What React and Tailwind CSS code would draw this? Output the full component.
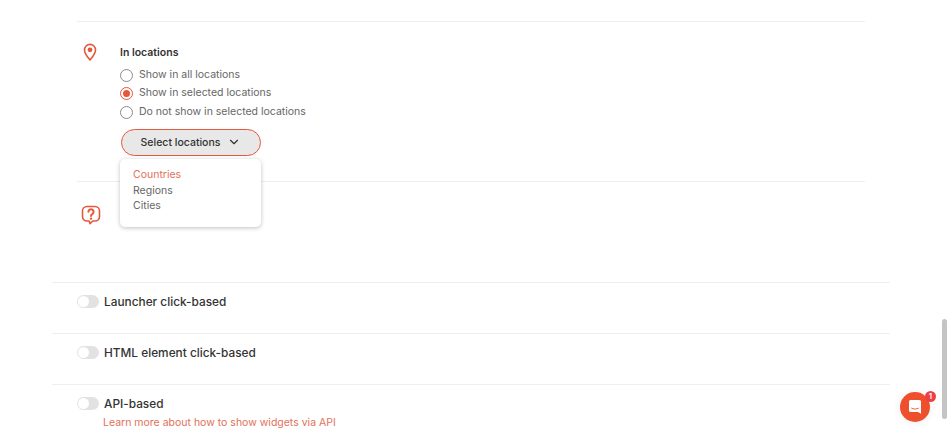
import { ChevronDown } from 'lucide-react';

function Radio({ label, checked }) {
  return (
    <label className="flex items-center gap-[6px] h-[18.5px] text-[10.5px] text-[#666]">
      {checked ? (
        <span className="w-[13px] h-[13px] mt-[1px] rounded-full border border-[#e5583c] flex items-center justify-center">
          <span className="w-[7px] h-[7px] rounded-full bg-[#e5583c]" />
        </span>
      ) : (
        <span className="w-[13px] h-[13px] mt-[1px] rounded-full border border-[#8a8a8a]" />
      )}
      {label}
    </label>
  );
}

function ToggleRow({ label, children }) {
  return (
    <div className="border-t border-[#eeeeee] h-[51px] pl-[25px] pt-[10px]">
      <div className="flex items-center gap-[5px] h-[18px] text-[11.85px] font-medium text-[#333]">
        <span className="w-[22px] h-[13px] -mt-[1px] rounded-full bg-[#e2e2e2] p-[1px] flex">
          <span className="w-[11px] h-[11px] rounded-full bg-white" />
        </span>
        <span className="mt-[1px]">{label}</span>
      </div>
      {children}
    </div>
  );
}

export default function App() {
  return (
    <div className="relative h-[434px] overflow-hidden bg-white font-['Inter','Liberation_Sans',sans-serif]">
      <div className="pl-[52px] pr-[58.5px]">
        {/* locations */}
        <div className="pt-[21px] px-[25px]">
          <div className="border-t border-[#eeeeee] pt-[21px] h-[160px] flex">
            <svg className="w-[16px] h-[18px] ml-[5px]" viewBox="0 0 16 18" fill="none">
              <path d="M8 17C5.5 13.8 2.5 10.6 2.5 6.9a5.5 5.5 0 0 1 11 0C13.5 10.6 10.5 13.8 8 17Z" stroke="#e5583c" strokeWidth="1.6" strokeLinejoin="round" />
              <circle cx="8" cy="6.8" r="2.4" fill="#e5583c" />
            </svg>
            <div className="ml-[22px] relative">
              <div className="h-[18px] pt-[1px] flex items-center text-[10.5px] font-semibold text-[#333] mb-[4.4px]">
                In locations
              </div>
              <Radio label="Show in all locations" />
              <Radio label="Show in selected locations" checked />
              <Radio label="Do not show in selected locations" />
              <button className="mt-[8.1px] ml-[1px] w-[140px] h-[27px] rounded-full border-[1.5px] border-[#e5583c] bg-[#e8e8e8] flex items-center justify-center gap-[7px] text-[10.5px] font-medium text-[#333]">
                Select locations
                <ChevronDown size={14} strokeWidth={2} />
              </button>
              <div className="absolute top-[116px] left-0 w-[141px] h-[68px] z-10 rounded-[5px] bg-white shadow-[0_1px_4px_rgba(0,0,0,0.25)] pl-[13px] pt-[8px] text-[10.5px] leading-[15.5px] text-[#666]">
                <div className="text-[#e2705a]">Countries</div>
                <div>Regions</div>
                <div>Cities</div>
              </div>
            </div>
          </div>
        </div>
        {/* questions */}
        <div className="px-[25px]">
          <div className="border-t border-[#eeeeee] h-[101px] pt-[23px]">
            <svg className="w-[20px] h-[20px] ml-[4px]" viewBox="0 0 20 20" fill="none">
              <path d="M6 1.5h8a4.5 4.5 0 0 1 4.5 4.5v5.5a4.5 4.5 0 0 1-4.5 4.5h-2.2L9 18.6 8.2 16H6a4.5 4.5 0 0 1-4.5-4.5V6A4.5 4.5 0 0 1 6 1.5Z" stroke="#e5583c" strokeWidth="1.6" strokeLinejoin="round" />
              <path d="M7.4 6.8a2.6 2.6 0 1 1 3.9 2.3c-.9.5-1.3 1-1.3 2" stroke="#e5583c" strokeWidth="2" strokeLinecap="round" />
              <circle cx="10" cy="13.6" r="1.2" fill="#e5583c" />
            </svg>
          </div>
        </div>
        <ToggleRow label="Launcher click-based" />
        <ToggleRow label="HTML element click-based" />
        <ToggleRow label="API-based">
          <a className="block ml-[26px] mt-[2px] text-[10.5px] text-[#e2705a]">
            Learn more about how to show widgets via API
          </a>
        </ToggleRow>
      </div>

      {/* scrollbar */}
      <div className="absolute right-0 top-0 bottom-0 w-[6px] pr-[1px] bg-white">
        <div className="mt-[319px] h-[100px] w-[5px] rounded-full bg-[#c4c4c4]" />
      </div>

      {/* chat launcher */}
      <div className="absolute left-[900px] top-[392px] w-[30px] h-[30px] rounded-full bg-[#ee4f2c] flex items-center justify-center shadow-[0_1px_8px_rgba(0,0,0,0.08)]">
        <svg width="14" height="16" viewBox="0 0 14 16">
          <path d="M2.5 1h9A1.5 1.5 0 0 1 13 2.5v12.3l-3-1.8H2.5A1.5 1.5 0 0 1 1 11.5v-9A1.5 1.5 0 0 1 2.5 1Z" fill="#fff" />
          <path d="M3.6 9.2c2 1.2 4.8 1.2 6.8 0" stroke="#ee4f2c" strokeWidth="0.9" fill="none" strokeLinecap="round" />
        </svg>
        <span className="absolute -top-[1px] -right-[6px] w-[11px] h-[11px] rounded-full bg-[#ee3f45] text-white text-[8px] font-semibold leading-[11px] text-center">
          1
        </span>
      </div>
    </div>
  );
}
